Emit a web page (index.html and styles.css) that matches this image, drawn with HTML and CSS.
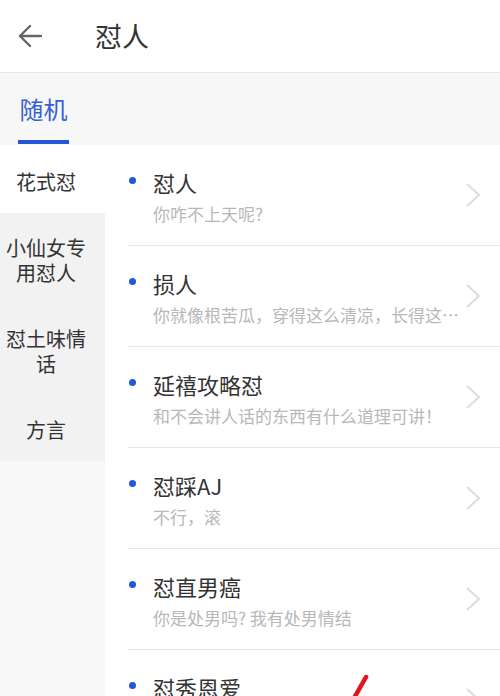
FILE: index.html
```html
<!DOCTYPE html>
<html>
<head>
	<title>怼人</title>
	<meta charset="UTF-8">
	<meta name="viewport" content="width=device-width, initial-scale=1.0">
	<link rel="stylesheet" href="styles.css">
</head>
<body>
	<div class="wrapper">
		<header class="topbar">
			<svg class="back" width="24" height="24" viewBox="0 0 24 24">
				<path d="M23 12H2M12 2L2 12L12 22" fill="none" stroke="#666" stroke-width="2.4" stroke-linecap="round" stroke-linejoin="round"/>
			</svg>
			<h1>怼人</h1>
		</header>
		<nav class="tabs">
			<div class="tab active">随机</div>
		</nav>
		<div class="main">
			<ul class="sidebar">
				<li class="selected">花式怼</li>
				<li>小仙女专用怼人</li>
				<li>怼土味情话</li>
				<li>方言</li>
			</ul>
			<ul class="list">
				<li class="row">
					<span class="dot"></span>
					<div class="row-body">
						<div class="row-title">怼人</div>
						<div class="row-sub">你咋不上天呢?</div>
					</div>
					<svg class="chevron" width="16" height="24" viewBox="0 0 16 24"><path d="M2 1L14 12L2 23" fill="none" stroke="#dcdcdc" stroke-width="2"/></svg>
				</li>
				<li class="row">
					<span class="dot"></span>
					<div class="row-body">
						<div class="row-title">损人</div>
						<div class="row-sub">你就像根苦瓜，穿得这么清凉，长得这么败火。</div>
					</div>
					<svg class="chevron" width="16" height="24" viewBox="0 0 16 24"><path d="M2 1L14 12L2 23" fill="none" stroke="#dcdcdc" stroke-width="2"/></svg>
				</li>
				<li class="row">
					<span class="dot"></span>
					<div class="row-body">
						<div class="row-title">延禧攻略怼</div>
						<div class="row-sub">和不会讲人话的东西有什么道理可讲！</div>
					</div>
					<svg class="chevron" width="16" height="24" viewBox="0 0 16 24"><path d="M2 1L14 12L2 23" fill="none" stroke="#dcdcdc" stroke-width="2"/></svg>
				</li>
				<li class="row">
					<span class="dot"></span>
					<div class="row-body">
						<div class="row-title">怼踩AJ</div>
						<div class="row-sub">不行，滚</div>
					</div>
					<svg class="chevron" width="16" height="24" viewBox="0 0 16 24"><path d="M2 1L14 12L2 23" fill="none" stroke="#dcdcdc" stroke-width="2"/></svg>
				</li>
				<li class="row">
					<span class="dot"></span>
					<div class="row-body">
						<div class="row-title">怼直男癌</div>
						<div class="row-sub">你是处男吗? 我有处男情结</div>
					</div>
					<svg class="chevron" width="16" height="24" viewBox="0 0 16 24"><path d="M2 1L14 12L2 23" fill="none" stroke="#dcdcdc" stroke-width="2"/></svg>
				</li>
				<li class="row">
					<span class="dot"></span>
					<div class="row-body">
						<div class="row-title">怼秀恩爱</div>
						<div class="row-sub">秀恩爱，死得快</div>
					</div>
					<svg class="chevron" width="16" height="24" viewBox="0 0 16 24"><path d="M2 1L14 12L2 23" fill="none" stroke="#dcdcdc" stroke-width="2"/></svg>
				</li>
			</ul>
		</div>
		<!-- red pen mark drawn over the screenshot -->
		<svg class="pen-mark" width="26" height="26" viewBox="0 0 26 26">
			<path d="M8 30L21 7" fill="none" stroke="#e3141c" stroke-width="4.5" stroke-linecap="round"/>
		</svg>
	</div>
</body>
</html>
```

FILE: styles.css
```css
body {
	margin: 0;
	padding: 0;
	background-color: #fff;
	font-family: "Noto Sans CJK SC", "Noto Sans", sans-serif;
	color: #333;
}
ul {
	list-style: none;
	margin: 0;
	padding: 0;
}
.wrapper {
	display: flex;
	flex-direction: column;
	height: 100vh;
	overflow: hidden;
	position: relative;
}
.topbar {
	display: flex;
	align-items: center;
	height: 72px;
	padding-left: 18px;
	border-bottom: 1px solid #e6e6e6;
	flex-shrink: 0;
}
.topbar h1 {
	margin: 0 0 0 53px;
	font-size: 27px;
	font-weight: normal;
	line-height: 36px;
	color: #333;
}
.tabs {
	display: flex;
	height: 72px;
	padding-left: 18px;
	background-color: #f7f7f7;
	flex-shrink: 0;
}
.tab {
	width: 51px;
	margin-top: 22px;
	height: 28px;
	padding-bottom: 17px;
	font-size: 24px;
	line-height: 28px;
	text-align: center;
	color: #3560d8;
}
.tab.active {
	border-bottom: 4px solid #2655d6;
}
.main {
	display: flex;
	flex-grow: 1;
}
.sidebar {
	width: 105px;
	flex-shrink: 0;
	background-color: #f8f8f8;
}
.sidebar li {
	padding: 22px 13px 19px 0;
	font-size: 20px;
	line-height: 25px;
	text-align: center;
	background-color: #f2f2f2;
}
.sidebar li.selected {
	padding-top: 24px;
	background-color: #fff;
}
.list {
	flex-grow: 1;
	min-width: 0;
}
.row {
	display: flex;
	height: 100px;
	margin-left: 23px;
	padding-left: 1px;
	border-bottom: 1px solid #e6e6e6;
}
.dot {
	width: 7px;
	height: 7px;
	margin-top: 32px;
	margin-right: 17px;
	border-radius: 50%;
	background-color: #1f57e0;
	flex-shrink: 0;
}
.row-body {
	flex-grow: 1;
	min-width: 0;
	padding-top: 22px;
	margin-right: 4px;
}
.row-title {
	font-size: 22px;
	line-height: 30px;
	color: #333;
}
.row-sub {
	margin-top: 5px;
	font-size: 17px;
	line-height: 24px;
	color: #b8b8b8;
	white-space: nowrap;
	overflow: hidden;
	text-overflow: ellipsis;
}
.chevron {
	align-self: center;
	margin-right: 19px;
	flex-shrink: 0;
}
.pen-mark {
	position: absolute;
	left: 345px;
	top: 670px;
}
```
